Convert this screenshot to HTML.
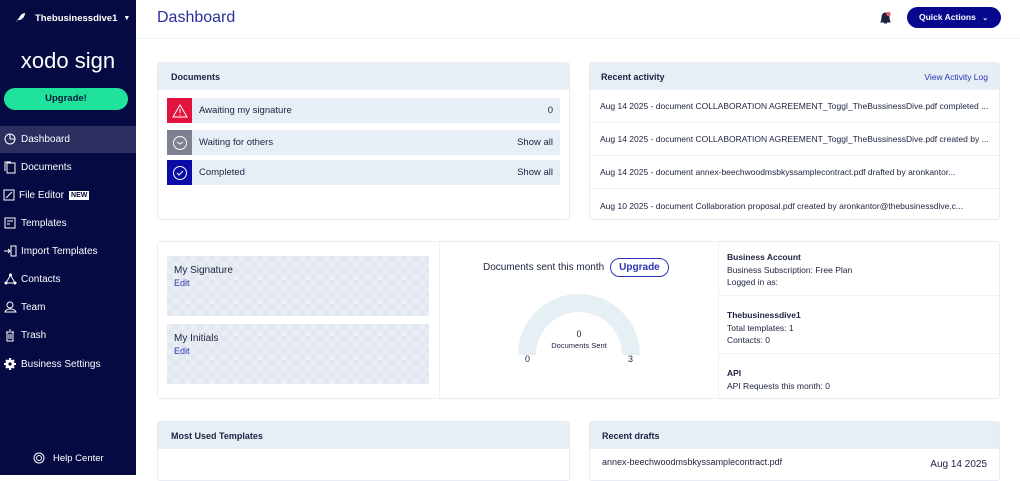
<!DOCTYPE html>
<html><head><meta charset="utf-8"><style>
*{box-sizing:border-box;margin:0;padding:0}
body{width:1020px;height:475px;overflow:hidden;font-family:"Liberation Sans",sans-serif;background:#fff;position:relative;color:#1c2240}
.sb{position:absolute;left:0;top:0;width:136px;height:475px;background:#050a42;color:#fff}
.abs{position:absolute}
.nav{position:absolute;left:0;width:136px;height:27px;font-size:10px;display:flex;align-items:center;padding-left:21px}
.nav svg{position:absolute;left:4px;top:7px}
.card{position:absolute;border:1px solid #e9edf3;border-radius:3px;background:#fff}
.ch{background:#e8eef6;height:27px;font-size:9px;font-weight:bold;display:flex;align-items:center;padding-left:13px;color:#1c2240}
.row{position:absolute;left:9px;right:9px;height:25px;background:#e8eef6;font-size:9.5px;display:flex;align-items:center}
.ic{width:25px;height:25px;margin-right:7px;display:flex;align-items:center;justify-content:center}
.rt{position:absolute;right:7px}
.ar{height:33px;border-bottom:1px solid #eef1f5;font-size:8.5px;display:flex;align-items:center;padding-left:10px;white-space:nowrap;overflow:hidden}
.sig{position:absolute;left:9px;width:262px;height:60px;background-color:#e9eef5;background-image:linear-gradient(45deg,#e3e8f0 25%,transparent 25%,transparent 75%,#e3e8f0 75%),linear-gradient(45deg,#e3e8f0 25%,transparent 25%,transparent 75%,#e3e8f0 75%);background-size:12px 12px;background-position:0 0,6px 6px;font-size:10px;padding:9px 7px}
.sig a{display:block;color:#2c35b5;font-size:9px;margin-top:2px}
.inf{position:absolute;left:8px;font-size:8.5px;line-height:12.5px}
</style></head><body>
<div class="sb">
 <div class="abs" style="left:14px;top:12px;font-size:9.5px;font-weight:bold;display:flex;align-items:center">
  <svg width="12" height="12" viewBox="0 0 12 12"><path d="M1 11 L5 6 C6 3 9 1 11 1 C11 4 9 7 6 8 L4 8 Z" fill="#fff"/></svg>
  <span style="margin-left:9px">Thebusinessdive1</span><span style="margin-left:6px;font-size:7px">▼</span></div>
 <div class="abs" style="left:0;width:136px;top:48px;text-align:center;font-size:22px">xodo sign</div>
 <div class="abs" style="left:4px;top:88px;width:124px;height:22px;border-radius:11px;background:#1fe39d;color:#051a3a;font-size:9.5px;font-weight:bold;text-align:center;line-height:22px">Upgrade!</div>
 <div class="nav" style="top:126px;background:#2b2e5f"><svg width="12" height="12"><circle cx="6" cy="6" r="5" fill="none" stroke="#fff"/><path d="M6 1V6H11" fill="none" stroke="#fff"/></svg>Dashboard</div>
 <div class="nav" style="top:154px"><svg width="12" height="13"><rect x="3" y="2" width="8" height="10" fill="none" stroke="#fff"/><path d="M1 10V1H7" fill="none" stroke="#fff"/></svg>Documents</div>
 <div class="nav" style="top:182px;padding-left:19px"><svg width="12" height="12" style="left:3px"><rect x="1" y="1" width="10" height="10" fill="none" stroke="#fff"/><path d="M3 9L9 3" stroke="#fff"/></svg>File Editor <span style="background:#fff;color:#050a42;font-size:7px;font-weight:bold;padding:1px 2px;margin-left:5px">NEW</span></div>
 <div class="nav" style="top:210px"><svg width="12" height="12"><rect x="1" y="1" width="10" height="10" fill="none" stroke="#fff"/><path d="M3 4H9M3 7H6" stroke="#fff"/></svg>Templates</div>
 <div class="nav" style="top:238px"><svg width="14" height="12"><path d="M0 6H6M4 4L6 6L4 8" fill="none" stroke="#fff"/><rect x="7" y="1" width="5" height="10" fill="none" stroke="#fff"/></svg>Import Templates</div>
 <div class="nav" style="top:266px"><svg width="13" height="12"><path d="M6.5 2L11 10H2Z" fill="none" stroke="#fff"/><circle cx="6.5" cy="2" r="1.5" fill="#fff"/><circle cx="2" cy="10" r="1.5" fill="#fff"/><circle cx="11" cy="10" r="1.5" fill="#fff"/></svg>Contacts</div>
 <div class="nav" style="top:294px"><svg width="13" height="12"><circle cx="6" cy="4" r="3" fill="none" stroke="#fff"/><path d="M1 11C2 7 10 7 12 11Z" fill="none" stroke="#fff"/></svg>Team</div>
 <div class="nav" style="top:322px"><svg width="12" height="13"><path d="M2 3H10M3 3V12H9V3M5 1H7M5 5V10M7 5V10" fill="none" stroke="#fff"/></svg>Trash</div>
 <div class="nav" style="top:351px"><svg width="12" height="12"><circle cx="6" cy="6" r="4.5" fill="#fff"/><path d="M6 0V12M0 6H12M2 2L10 10M10 2L2 10" stroke="#fff" stroke-width="2"/><circle cx="6" cy="6" r="1.6" fill="#050a42"/></svg>Business Settings</div>
 <div class="abs" style="left:33px;top:452px;font-size:9.5px;display:flex;align-items:center"><svg width="12" height="12"><circle cx="6" cy="6" r="5" fill="none" stroke="#fff"/><circle cx="6" cy="6" r="2.5" fill="none" stroke="#fff"/></svg><span style="margin-left:8px">Help Center</span></div>
</div>
<div class="abs" style="left:136px;top:38px;width:884px;height:1px;background:#eef1f5"></div>
<div class="abs" style="left:157px;top:9px;font-size:16px;color:#2a2f9c">Dashboard</div>
<svg class="abs" style="left:879px;top:11px" width="13" height="14"><path d="M2 11C3 9 3 8 3 6C3 3 5 2 6.5 2C8 2 10 3 10 6C10 8 10 9 11 11Z M5 12H8" fill="#1c2240" stroke="#1c2240"/><circle cx="9.5" cy="3" r="2.2" fill="#e85a6a"/></svg>
<div class="abs" style="left:907px;top:7px;width:94px;height:21px;border-radius:11px;background:#07088d;color:#fff;font-size:8.5px;font-weight:bold;line-height:21px;padding-left:12px;white-space:nowrap">Quick Actions <span style="font-size:7px;margin-left:4px">⌄</span></div>

<div class="card" style="left:157px;top:62px;width:413px;height:158px">
 <div class="ch">Documents</div>
 <div class="row" style="top:35px"><div class="ic" style="background:#e0143c"><svg width="16" height="14"><path d="M8 1L15 13H1Z" fill="none" stroke="#fff"/><path d="M8 5V9M8 10.5V11.5" stroke="#fff"/></svg></div>Awaiting my signature<span class="rt">0</span></div>
 <div class="row" style="top:67px"><div class="ic" style="background:#7c8090"><svg width="16" height="16"><circle cx="8" cy="8" r="6.5" fill="none" stroke="#fff"/><path d="M5 7L8 9L11 7" fill="none" stroke="#fff"/></svg></div>Waiting for others<span class="rt">Show all</span></div>
 <div class="row" style="top:97px"><div class="ic" style="background:#0a0ca8"><svg width="16" height="16"><circle cx="8" cy="8" r="6.5" fill="none" stroke="#fff"/><path d="M5 8L7 10L11 6" fill="none" stroke="#fff"/></svg></div>Completed<span class="rt">Show all</span></div>
</div>

<div class="card" style="left:589px;top:62px;width:411px;height:158px">
 <div class="ch" style="padding-left:11px">Recent activity<span style="margin-left:auto;margin-right:11px;color:#2c35b5;font-weight:normal;font-size:8.5px">View Activity Log</span></div>
 <div class="ar">Aug 14 2025 - document COLLABORATION AGREEMENT_Toggl_TheBussinessDive.pdf completed ...</div>
 <div class="ar">Aug 14 2025 - document COLLABORATION AGREEMENT_Toggl_TheBussinessDive.pdf created by ...</div>
 <div class="ar">Aug 14 2025 - document annex-beechwoodmsbkyssamplecontract.pdf drafted by aronkantor...</div>
 <div class="ar" style="border:none">Aug 10 2025 - document Collaboration proposal.pdf created by aronkantor@thebusinessdive.c...</div>
</div>

<div class="card" style="left:157px;top:241px;width:843px;height:158px">
 <div class="sig" style="top:14px">My Signature<a>Edit</a></div>
 <div class="sig" style="top:82px">My Initials<a>Edit</a></div>
 <div class="abs" style="left:281px;top:0;width:1px;height:156px;background:#eef1f5"></div>
 <div class="abs" style="left:560px;top:0;width:1px;height:156px;background:#eef1f5"></div>
 <div class="abs" style="left:325px;top:16px;font-size:10px;display:flex;align-items:center">Documents sent this month <span style="margin-left:6px;border:1px solid #2c35b5;border-radius:10px;padding:3px 8px;color:#2c35b5;font-weight:bold">Upgrade</span></div>
 <svg class="abs" style="left:358px;top:50px" width="126" height="63"><path d="M2 63A61 61 0 0 1 124 63H106A43 43 0 0 0 20 63Z" fill="#e6eff4"/></svg>
 <div class="abs" style="left:358px;top:87px;width:126px;text-align:center;font-size:9px">0<div style="font-size:7.5px;margin-top:2px">Documents Sent</div></div>
 <div class="abs" style="left:367px;top:112px;font-size:9px">0</div>
 <div class="abs" style="left:470px;top:112px;font-size:9px">3</div>
 <div class="abs" style="left:561px;top:53px;width:281px;height:1px;background:#eef1f5"></div>
 <div class="abs" style="left:561px;top:111px;width:281px;height:1px;background:#eef1f5"></div>
 <div class="inf" style="left:569px;top:9px"><b>Business Account</b><br>Business Subscription: Free Plan<br>Logged in as:</div>
 <div class="inf" style="left:569px;top:67px"><b>Thebusinessdive1</b><br>Total templates: 1<br>Contacts: 0</div>
 <div class="inf" style="left:569px;top:125px"><b>API</b><br>API Requests this month: 0</div>
</div>

<div class="card" style="left:157px;top:421px;width:413px;height:60px"><div class="ch">Most Used Templates</div></div>
<div class="card" style="left:589px;top:421px;width:411px;height:60px"><div class="ch" style="padding-left:12px">Recent drafts</div>
 <div style="font-size:9px;padding:8px 12px;display:flex">annex-beechwoodmsbkyssamplecontract.pdf<span style="margin-left:auto;font-size:10px;margin-top:2px">Aug 14 2025</span></div></div>
</body></html>
